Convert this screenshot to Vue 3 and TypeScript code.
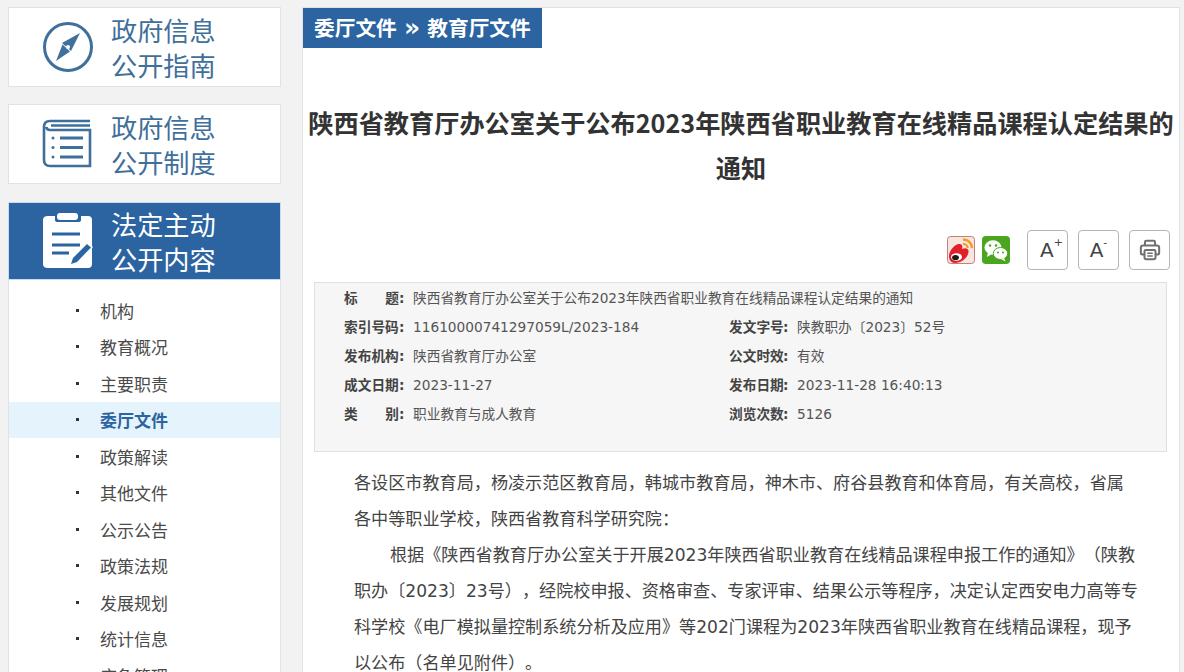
<template>
  <div class="page">
    <aside class="side">
      <div class="block first">
        <svg class="block-icon" width="52" height="52" viewBox="0 0 52 52">
          <circle cx="26" cy="26" r="23.5" fill="none" stroke="#3f6f9b" stroke-width="3" />
          <path d="M38 12 L29 30 L20 22 Z" fill="#3f6f9b" />
          <path d="M14 40 L20.5 23.5 L28 30.5 Z" fill="#3f6f9b" />
          <circle cx="26" cy="26" r="2" fill="#fff" />
        </svg>
        <div class="block-text">政府信息<br />公开指南</div>
      </div>
      <div class="block">
        <svg class="block-icon" width="52" height="52" viewBox="0 0 52 52">
          <path d="M48 3 H8 Q2 3 2 9 V42 Q2 48 8 48 H48 V12 H8 Q4.500 12 4.500 9" fill="none" stroke="#3f6f9b" stroke-width="2.600" />
          <path d="M9 7.500 H48" stroke="#3f6f9b" stroke-width="2.600" />
          <path d="M18 20 H41 M18 29.500 H41 M18 39 H41" stroke="#3f6f9b" stroke-width="2.800" />
          <circle cx="11" cy="20" r="1.500" fill="#3f6f9b" />
          <circle cx="11" cy="29.500" r="1.500" fill="#3f6f9b" />
          <circle cx="11" cy="39" r="1.500" fill="#3f6f9b" />
        </svg>
        <div class="block-text">政府信息<br />公开制度</div>
      </div>
      <div class="block active">
        <svg class="block-icon" width="52" height="58" viewBox="0 0 52 58">
          <path d="M6 4 H13 V8 Q13 10 16 10 H36 Q39 10 39 8 V4 H46 Q50 4 50 8 V52 Q50 56 46 56 H6 Q1 56 1 52 V8 Q1 4 6 4 Z" fill="#fff" />
          <rect x="15" y="1" width="21" height="7" rx="3" fill="#fff" />
          <path d="M10 22 H38 M10 33 H38 M10 41 H27" stroke="#2b64a0" stroke-width="3" />
          <path d="M27 54 L30 45 L45 30 L51 35 L36 50 Z" fill="#fff" />
          <path d="M29 52 L31 46 L45 32 L49 35.500 L35 50 Z" fill="#2b64a0" />
        </svg>
        <div class="block-text">法定主动<br />公开内容</div>
      </div>
      <ul class="nav">
        <li v-for="item in navItems" :key="item" :class="{ current: item === '委厅文件' }">
          <i class="dot"></i>{{ item }}
        </li>
      </ul>
    </aside>

    <main class="main">
      <div class="crumb">委厅文件 <span class="sep">»</span> 教育厅文件</div>
      <h1 class="title">陕西省教育厅办公室关于公布2023年陕西省职业教育在线精品课程认定结果的通知</h1>

      <div class="tools">
        <svg class="share" width="28" height="28" viewBox="0 0 28 28">
          <rect x="0.5" y="0.5" width="27" height="27" rx="3" fill="#f7e6e0" stroke="#c47f78" />
          <path d="M2 20 C2 14 9 7 13 8 C16 8.600 15.500 11.500 15 13 C18.500 11.500 22 12.500 21.500 16 C21 22 14 27 8 27 C4 27 2 24 2 20 Z" fill="#e0202a" />
          <ellipse cx="9.500" cy="21" rx="5.500" ry="3.800" fill="#fff" />
          <ellipse cx="8.500" cy="21.500" rx="3.400" ry="2.600" fill="#1b1b1b" />
          <path d="M16 3.500 A8.500 8.500 0 0 1 25 12" fill="none" stroke="#f39a1e" stroke-width="2.400" />
          <path d="M16 8 A4.500 4.500 0 0 1 20.800 12" fill="none" stroke="#f39a1e" stroke-width="2.200" />
        </svg>
        <svg class="share" width="28" height="28" viewBox="0 0 28 28">
          <rect width="28" height="28" rx="4" fill="#4aa51f" />
          <ellipse cx="11" cy="11.500" rx="8.500" ry="7.200" fill="#fff" />
          <path d="M6 16 L5 21 L10 18 Z" fill="#fff" />
          <ellipse cx="18.500" cy="17.500" rx="7.200" ry="6" fill="#fff" stroke="#4aa51f" />
          <path d="M22 22 L23.500 25.500 L19 23 Z" fill="#fff" />
          <circle cx="8" cy="9.500" r="1.200" fill="#4aa51f" />
          <circle cx="14" cy="9.500" r="1.200" fill="#4aa51f" />
          <circle cx="16" cy="16.500" r="1" fill="#4aa51f" />
          <circle cx="21" cy="16.500" r="1" fill="#4aa51f" />
        </svg>
        <button class="tool-btn plus">A<sup>+</sup></button>
        <button class="tool-btn">A<sup>-</sup></button>
        <button class="tool-btn">
          <svg width="22" height="22" viewBox="0 0 24 24" fill="none" stroke="#707070" stroke-width="2.200">
            <path d="M6.500 7 V3.500 Q6.500 2 8 2 H16 Q17.500 2 17.500 3.500 V7" />
            <path d="M6 17 H4 Q2 17 2 15 V9.500 Q2 7 4.500 7 H19.500 Q22 7 22 9.500 V15 Q22 17 20 17 H18" />
            <rect x="6" y="12" width="12" height="10" rx="1.500" />
            <path d="M9 15.500 H15 M9 18.500 H15" stroke-width="1.800" />
          </svg>
        </button>
      </div>

      <div class="meta">
        <div class="meta-row">
          <b class="spread"><span>标</span><span>题</span></b><b class="colon">:</b>
          <span>陕西省教育厅办公室关于公布2023年陕西省职业教育在线精品课程认定结果的通知</span>
        </div>
        <div v-for="row in metaRows" :key="row[0]" class="meta-row">
          <div class="cell">
            <b v-if="row[0].length === 4" class="label">{{ row[0] }}</b>
            <b v-else class="spread"><span>{{ row[0][0] }}</span><span>{{ row[0][1] }}</span></b>
            <b class="colon">:</b>
            <span>{{ row[1] }}</span>
          </div>
          <div class="cell">
            <b class="label">{{ row[2] }}</b><b class="colon">:</b>
            <span>{{ row[3] }}</span>
          </div>
        </div>
      </div>

      <div class="body">
        <p>各设区市教育局，杨凌示范区教育局，韩城市教育局，神木市、府谷县教育和体育局，有关高校，省属各中等职业学校，陕西省教育科学研究院：</p>
        <p class="indent">根据《陕西省教育厅办公室关于开展2023年陕西省职业教育在线精品课程申报工作的通知》（陕教职办〔2023〕23号），经院校申报、资格审查、专家评审、结果公示等程序，决定认定西安电力高等专科学校《电厂模拟量控制系统分析及应用》等202门课程为2023年陕西省职业教育在线精品课程，现予以公布（名单见附件）。</p>
      </div>
    </main>
  </div>
</template>

<script setup lang="ts">
const navItems: string[] = [
  '机构',
  '教育概况',
  '主要职责',
  '委厅文件',
  '政策解读',
  '其他文件',
  '公示公告',
  '政策法规',
  '发展规划',
  '统计信息',
  '应急管理',
]

const metaRows: string[][] = [
  ['索引号码', '11610000741297059L/2023-184', '发文字号', '陕教职办〔2023〕52号'],
  ['发布机构', '陕西省教育厅办公室', '公文时效', '有效'],
  ['成文日期', '2023-11-27', '发布日期', '2023-11-28 16:40:13'],
  ['类别', '职业教育与成人教育', '浏览次数', '5126'],
]
</script>

<style>
html,
body {
  margin: 0;
  height: 672px;
  overflow: hidden;
  background: #f2f2f2;
}
</style>

<style scoped>
.page {
  display: flex;
  align-items: flex-start;
  gap: 21px;
  padding: 7px 4px 0 8px;
  font-family: "DejaVu Sans", "Noto Sans CJK SC", sans-serif;
  color: #444;
  text-spacing-trim: space-all;
}

.side {
  width: 273px;
  flex: none;
}

.block {
  display: flex;
  align-items: center;
  gap: 17px;
  height: 78px;
  margin-bottom: 18px;
  padding-left: 33px;
  background: #fff;
  border: 1px solid #e2e2e2;
  color: #3f6f9b;
}

.block.first {
  margin-bottom: 17px;
}

.block.active {
  height: 76px;
  margin-bottom: 0;
  background: #2b64a0;
  border-color: #c6dcf2;
  color: #fff;
}

.block-icon {
  flex: none;
}

.block-text {
  padding-top: 5px;
  font-size: 26.200px;
  line-height: 35px;
}

.nav {
  list-style: none;
  margin: 0;
  padding: 12px 0 0;
  background: #fff;
  border: 1px solid #e2e2e2;
  border-width: 0 1px;
}

.nav li {
  display: flex;
  align-items: center;
  height: 36.500px;
  padding-left: 67px;
  font-size: 17px;
  color: #4a4a4a;
}

.nav li.current {
  background: #e5f3fc;
  color: #2b64a0;
  font-weight: bold;
}

.dot {
  width: 3px;
  height: 3px;
  margin-right: 21px;
  background: #333;
}

.main {
  flex: 1;
  min-width: 0;
  min-height: 700px;
  background: #fff;
  border: 1px solid #e2e2e2;
}

.crumb {
  display: inline-block;
  height: 38px;
  padding: 2px 11px 0;
  line-height: 38px;
  background: #2b64a0;
  color: #fff;
  font-size: 20.700px;
  font-weight: bold;
}

.sep {
  font-size: 25px;
  line-height: 30px;
}

.title {
  margin: 52px 2px 0;
  font-family: "Noto Sans CJK SC", sans-serif;
  font-size: 25.200px;
  line-height: 45px;
  font-weight: bold;
  text-align: center;
  color: #333;
}

.tools {
  display: flex;
  align-items: center;
  justify-content: flex-end;
  margin-top: 40px;
  padding-right: 9px;
}

.share {
  margin-right: 7px;
}

.tool-btn {
  display: flex;
  align-items: center;
  justify-content: center;
  width: 41px;
  height: 40px;
  margin-left: 10px;
  padding: 0;
  background: #fff;
  border: 1.500px solid #b5b5b5;
  border-radius: 4px;
  font-family: "DejaVu Sans", sans-serif;
  font-size: 20px;
  color: #444;
}

.tool-btn.plus {
  padding-left: 8px;
}

.tool-btn sup {
  font-size: 11px;
  line-height: 1;
  align-self: flex-start;
  margin-top: 6px;
}

.meta {
  margin: 12px 12px 0 11px;
  height: 170px;
  box-sizing: border-box;
  padding: 1px 0 0 29px;
  background: #f6f6f6;
  border: 1px solid #e0e0e0;
  font-size: 13.700px;
  color: #555;
}

.meta-row {
  display: flex;
  align-items: baseline;
  height: 29px;
  line-height: 29px;
}

.cell {
  display: flex;
  align-items: baseline;
  width: 385px;
}

.label,
.spread {
  color: #444;
  font-weight: bold;
  width: 55px;
  flex: none;
  white-space: nowrap;
}

.cell + .cell .label {
  width: 54px;
}

.spread {
  display: flex;
  justify-content: space-between;
}

.colon {
  width: 14px;
  flex: none;
  color: #444;
}

.body {
  padding: 13px 40px 0 51px;
  font-size: 17.120px;
  line-height: 36px;
  color: #444;
}

.body p {
  margin: 0;
}

.body .indent {
  text-indent: 36px;
}
</style>
